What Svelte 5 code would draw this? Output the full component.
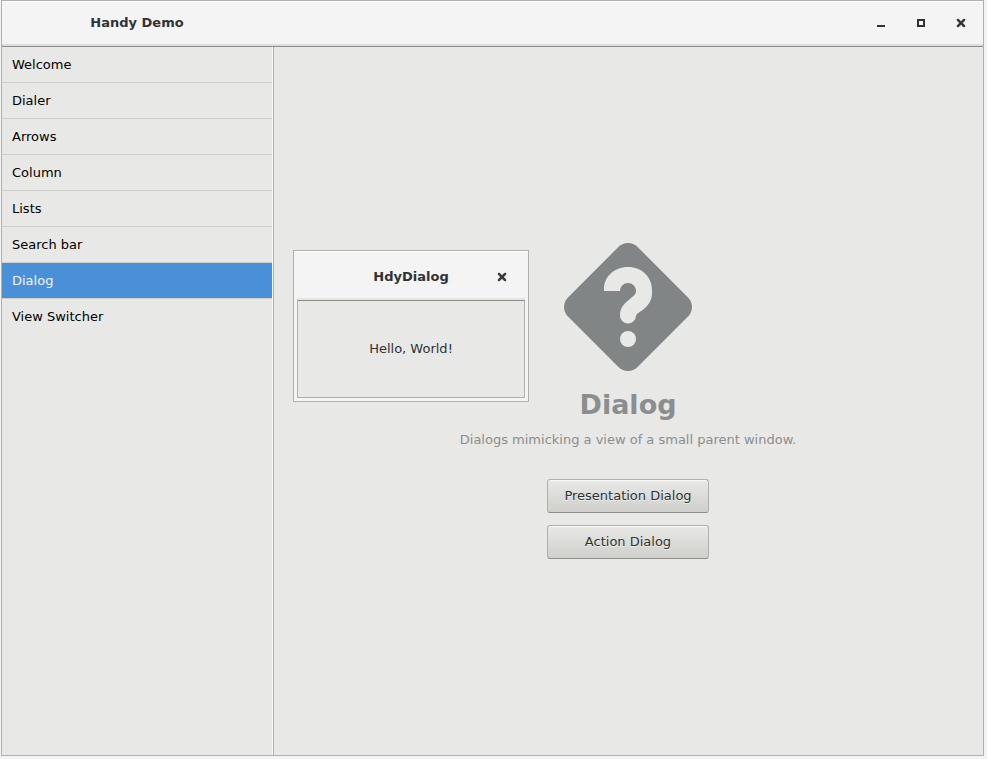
<script>
  const pages = ['Welcome', 'Dialer', 'Arrows', 'Column', 'Lists', 'Search bar', 'Dialog', 'View Switcher'];
  let selected = $state('Dialog');
  let dialogOpen = $state(true);
</script>

{#snippet closeIcon()}
  <svg width="16" height="16" viewBox="0 0 16 16" aria-hidden="true">
    <path d="M4 4h1.6L8 6.4 10.4 4H12v1.6L9.6 8 12 10.4V12h-1.6L8 9.6 5.6 12H4v-1.6L6.4 8 4 5.6Z" fill="#2e3436" stroke="#2e3436" stroke-width="0.3" />
  </svg>
{/snippet}

<div class="window">
  <header class="titlebar">
    <h1>Handy Demo</h1>
    <div class="controls">
      <button aria-label="Minimize">
        <svg width="16" height="16" viewBox="0 0 16 16" aria-hidden="true"><path d="M4 10h8v2H4z" fill="#2e3436" /></svg>
      </button>
      <button aria-label="Maximize">
        <svg width="16" height="16" viewBox="0 0 16 16" aria-hidden="true"><path d="M5 5h6v6H5z" fill="none" stroke="#2e3436" stroke-width="2" /></svg>
      </button>
      <button aria-label="Close">{@render closeIcon()}</button>
    </div>
  </header>

  <div class="body">
    <nav>
      {#each pages as page}
        <button class="row" class:selected={page === selected} onclick={() => (selected = page)}>{page}</button>
      {/each}
    </nav>

    <main>
      <svg class="picture" width="128" height="128" viewBox="0 0 128 128" aria-hidden="true">
        <path
          fill="#828585"
          d="M54.4 4 A13.6 13.6 0 0 1 73.6 4 L124 54.4 A13.6 13.6 0 0 1 124 73.6 L73.6 124 A13.6 13.6 0 0 1 54.4 124 L4 73.6 A13.6 13.6 0 0 1 4 54.4 Z"
        />
        <path
          fill="#e8e8e6"
          d="M40 48 V46 C40 34 50 24 64 24 C78 24 88 34 88 47 V50 C88 58 84 63 78 67.5 C74 70 72.5 71 72 73 A8 8 0 0 1 56 72 C56 66 59 62 63 58.5 C69 53 72 52 72 48 A8 8 0 0 0 56 48 Z"
        />
        <circle cx="64" cy="96" r="8" fill="#e8e8e6" />
      </svg>
      <h2>Dialog</h2>
      <p>Dialogs mimicking a view of a small parent window.</p>
      <div class="actions">
        <button onclick={() => (dialogOpen = true)}>Presentation Dialog</button>
        <button onclick={() => (dialogOpen = true)}>Action Dialog</button>
      </div>

      {#if dialogOpen}
        <div class="dialog" role="dialog" aria-labelledby="dialog-title">
          <div class="dialog-header">
            <h3 id="dialog-title">HdyDialog</h3>
            <button aria-label="Close dialog" onclick={() => (dialogOpen = false)}>{@render closeIcon()}</button>
          </div>
          <div class="dialog-body">Hello, World!</div>
        </div>
      {/if}
    </main>
  </div>
</div>

<style>
  :global(body) {
    background: #f3f3f3;
  }
  .window {
    box-sizing: border-box;
    display: flex;
    flex-direction: column;
    min-height: calc(100vh - 3px);
    margin: 0 3px 0 1px;
    border: 1px solid #b0b0ad;
    background: #e8e8e6;
    color: #2e3436;
    font: 13px/16px 'DejaVu Sans', sans-serif;
  }
  h1,
  h2,
  h3,
  p {
    margin: 0;
  }
  button {
    padding: 0;
    border: 0;
    background: none;
    color: inherit;
    font: inherit;
  }
  svg {
    display: block;
  }
  .titlebar {
    box-sizing: border-box;
    display: flex;
    align-items: center;
    height: 46px;
    padding-bottom: 2px;
    border-bottom: 1px solid #8c8c89;
    background: #f4f4f4;
    box-shadow: inset 0 1px #fff, inset 0 -2px #dededc;
  }
  h1 {
    width: 270px;
    text-align: center;
    font-size: 13px;
  }
  .controls {
    display: flex;
    gap: 24px;
    margin-left: auto;
    padding-right: 14px;
  }
  .body {
    display: flex;
    flex: 1;
  }
  nav {
    flex: none;
    width: 270px;
    border-right: 1px solid #b0b0ad;
    box-shadow: inset -1px 0 #f8f8f7;
    padding-right: 1px;
  }
  .row {
    display: block;
    width: 100%;
    height: 36px;
    padding: 0 10px;
    border-bottom: 1px solid #cfcfcc;
    color: #000;
    text-align: left;
  }
  .row:last-child {
    border-bottom-color: transparent;
  }
  .row.selected {
    background: #4a90d9;
    background-clip: padding-box;
    color: #f3f3f3;
  }
  main {
    position: relative;
    display: flex;
    flex: 1;
    flex-direction: column;
    align-items: center;
    justify-content: center;
    padding-right: 1px;
  }
  .picture {
    margin-bottom: 18px;
  }
  h2 {
    margin-bottom: 11px;
    color: #8b8e8f;
    font-size: 27px;
    line-height: 32px;
  }
  p {
    margin-bottom: 31px;
    color: #8b8e8f;
  }
  .actions {
    display: flex;
    flex-direction: column;
    gap: 12px;
    min-width: 162px;
  }
  .actions button {
    box-sizing: border-box;
    height: 34px;
    padding: 0 16px;
    border: 1px solid #b0b0ad;
    border-bottom-color: #8c8c89;
    border-radius: 3px;
    background: linear-gradient(#e8e8e6, #cfcfcc);
    box-shadow: inset 0 1px #fafafa;
    text-shadow: 0 1px #f0f0ef;
  }
  .dialog {
    position: absolute;
    top: 203px;
    left: 19px;
    box-sizing: border-box;
    width: 236px;
    padding: 0 3px 3px;
    border: 1px solid #b0b0ad;
    background: #f4f4f4;
    box-shadow: inset 0 1px #fff;
  }
  .dialog-header {
    box-sizing: border-box;
    display: grid;
    grid-template-columns: 1fr auto 1fr;
    align-items: center;
    height: 49px;
    padding: 2px 15px 0;
    box-shadow: inset 0 -2px #e4e4e2;
  }
  .dialog-header h3 {
    grid-column: 2;
    font-size: 13px;
  }
  .dialog-header button {
    justify-self: end;
  }
  .dialog-body {
    box-sizing: border-box;
    display: flex;
    align-items: center;
    justify-content: center;
    height: 98px;
    border: 1px solid #b0b0ad;
    border-top-color: #8c8c89;
    background: #e8e8e6;
  }
</style>
